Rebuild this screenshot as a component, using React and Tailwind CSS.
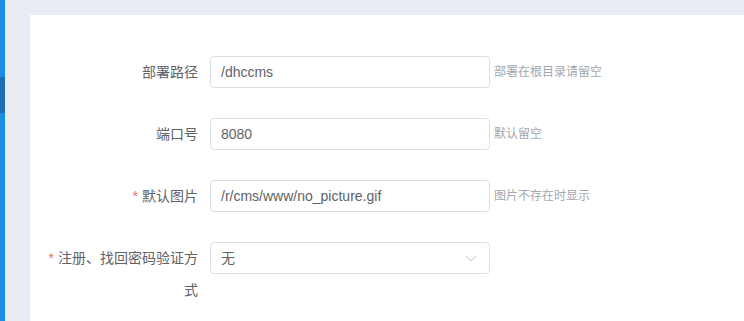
import React from 'react';

const rows = [
  { label: '部署路径', value: '/dhccms', hint: '部署在根目录请留空' },
  { label: '端口号', value: '8080', hint: '默认留空' },
  { label: '默认图片', value: '/r/cms/www/no_picture.gif', hint: '图片不存在时显示', required: true },
  { label: '注册、找回密码验证方式', value: '无', required: true, select: true },
];

const font = { fontFamily: '"Liberation Sans", "Noto Sans CJK SC", sans-serif' };

export default function App() {
  return (
    <div className="flex h-[321px] w-[744px] overflow-hidden" style={font}>
      <div className="flex w-[5px] flex-col">
        <div className="h-[77px] bg-[#1a8de6]" />
        <div className="h-[36px] bg-[#1e6db2]" />
        <div className="flex-1 bg-[#1a8de6]" />
      </div>
      <div className="flex-1 bg-[#e9edf3] pl-[25px] pt-[15px]">
        <div className="h-full bg-white pl-[12px] pt-[41px]">
          {rows.map((r) => (
            <div key={r.label} className="mb-[30px] flex items-start">
              <label className="w-[168px] shrink-0 pr-3 text-right text-sm leading-[32px] text-[#606266]">
                {r.required && <span className="mr-1 text-[#f56c6c]">*</span>}
                {r.label}
              </label>
              <div className="flex h-[32px] w-[280px] shrink-0 items-center justify-between rounded border border-[#dcdfe6] px-[10px] text-sm text-[#606266]">
                <span>{r.value}</span>
                {r.select && (
                  <svg width="12" height="7" viewBox="0 0 12 7" fill="none" className="mr-[2px]">
                    <path d="M1 1l5 5 5-5" stroke="#c0c4cc" strokeWidth="1" />
                  </svg>
                )}
              </div>
              {r.hint && (
                <span className="ml-1 text-xs leading-[32px] text-[#a3a6ad]">{r.hint}</span>
              )}
            </div>
          ))}
        </div>
      </div>
    </div>
  );
}
